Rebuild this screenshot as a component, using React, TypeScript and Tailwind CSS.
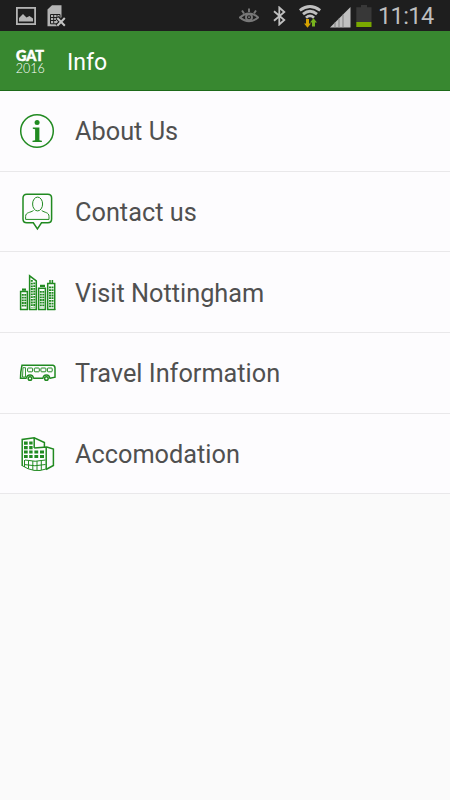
import React from "react";

const GREEN = "#218a21";

function PictureIcon() {
  return (
    <svg width="20" height="18" viewBox="0 0 20 18">
      <rect x="0.9" y="0.9" width="18.2" height="16.2" fill="none" stroke="#b4b4b4" strokeWidth="1.8" />
      <path d="M3 14.5V11L7 7L10.5 10.5L13.5 9L17 11.5V14.5Z" fill="#b4b4b4" />
    </svg>
  );
}

function SimIcon() {
  return (
    <svg width="20" height="22" viewBox="0 0 20 22">
      <path d="M0.5 4.5L5 0.3H14.5V12L10 21.2H0.5Z" fill="#b4b4b4" />
      <path d="M4 12.5H12.5M4 15.5H9M6.7 9.5V18.5M10 9.5V15" stroke="#1e1e1e" strokeWidth="1" fill="none" />
      <path d="M3.5 9.5H13V18.8H3.5Z" fill="none" stroke="#1e1e1e" strokeWidth="1" />
      <path d="M10 12.5L18 21M18 12.5L10 21" stroke="#1e1e1e" strokeWidth="4.2" />
      <path d="M10.3 13L17.8 20.8M17.8 13L10.3 20.8" stroke="#c4c4c4" strokeWidth="2" />
    </svg>
  );
}

function EyeIcon() {
  return (
    <svg width="20" height="18" viewBox="0 0 20 18" fill="none" stroke="#787878" strokeWidth="1.9">
      <path d="M0.8 10.5Q10 2.5 19.2 10.5Q10 17.8 0.8 10.5Z" />
      <circle cx="10" cy="10.2" r="3" />
      <circle cx="10" cy="10.2" r="1" fill="#787878" stroke="none" />
      <path d="M10 5V1.5M5 6.5L3 3.5M15 6.5L17 3.5" />
    </svg>
  );
}

function BluetoothIcon() {
  return (
    <svg width="13" height="20" viewBox="0 0 13 20">
      <path d="M1 5.2L11.3 14L6.3 18.5V1.5L11.3 6L1 14.8" fill="none" stroke="#c0c0c0" strokeWidth="1.8" />
    </svg>
  );
}

function WifiIcon() {
  return (
    <svg width="22" height="24" viewBox="0 0 22 24">
      <g fill="none" stroke="#c0c0c0" strokeWidth="2.8">
        <path d="M0.8 5.4Q11 -2.4 21.2 5.4" />
        <path d="M4 9.2Q11 3.4 18 9.2" />
        <path d="M7 12.8Q11 9 15 12.8" />
      </g>
      <path d="M7 14H10V18.5H12L8.5 22.8L5 18.5H7Z" fill="#d6a200" />
      <path d="M14.5 13.2L18 17.5H16V21.5H13V17.5H11Z" fill="#78b41e" />
    </svg>
  );
}

function SignalIcon() {
  return (
    <svg width="21" height="21" viewBox="0 0 21 21">
      <path d="M0 20.5L20.5 0V20.5Z" fill="#c0c0c0" />
      <path d="M5 15.5V20.5M9 11.5V20.5M13 7.5V20.5" stroke="#808080" strokeWidth="1" />
    </svg>
  );
}

function BatteryIcon() {
  return (
    <svg width="16" height="22" viewBox="0 0 16 22">
      <path d="M5 0H11V2.2H15.5V17H0.3V2.2H5Z" fill="#383838" />
      <rect x="0.3" y="17" width="15.2" height="5" fill="#7aa800" />
    </svg>
  );
}

function InfoIcon() {
  return (
    <svg width="40" height="40" viewBox="0 0 40 40">
      <circle cx="19" cy="20" r="16.3" fill="none" stroke={GREEN} strokeWidth="1.5" />
      <circle cx="19.1" cy="11.6" r="2.5" fill={GREEN} />
      <path d="M14.8 16.5H21.4V29.2L23.9 29.8V31H14.5V29.8L17.1 29.2V18.2L14.8 17.8Z" fill={GREEN} />
    </svg>
  );
}

function ContactIcon() {
  return (
    <svg width="40" height="40" viewBox="0 0 40 40" fill="none" stroke={GREEN}>
      <path
        d="M8.8 2.3H29.8Q33.6 2.3 33.6 6.1V27Q33.6 30.8 29.8 30.8H23.5L19.4 36.8L15.3 30.8H8.8Q5 30.8 5 27V6.1Q5 2.3 8.8 2.3Z"
        strokeWidth="1.5"
      />
      <ellipse cx="19.6" cy="12" rx="5" ry="6.9" strokeWidth="1" />
      <path d="M15.5 18.5C12.5 20.8 7.6 20 7.6 24.5V27.4H31V24.5C31 20 26.5 20.8 23.7 18.5" strokeWidth="1" />
    </svg>
  );
}

function CityIcon() {
  return (
    <svg width="40" height="40" viewBox="0 0 40 40" fill="none" stroke={GREEN}>
      <g strokeWidth="1.5">
        <path d="M2.6 38V19.6H9.4V38M11.6 38V3.8L18.3 8.8V38M20.6 38V16.3H27.4V38M29.7 38V11.6H36.7V38" />
        <path d="M2 37.5H10M11 37.5H19M20 37.5H28M29 37.5H37.4" />
      </g>
      <path d="M4 17.6H8M22 13.8H27" strokeWidth="2.2" />
      <path d="M32 8V11M34.4 8V11" strokeWidth="1.5" />
      <g strokeWidth="2" strokeDasharray="1.8 0.9">
        <path d="M4.8 22V35.5M7.3 22V35.5M13.8 8V35.5M16.3 10.5V35.5M22.8 19V35.5M25.3 19V35.5M32 14.5V35.5M34.5 14.5V35.5" />
      </g>
    </svg>
  );
}

function BusIcon() {
  return (
    <svg width="40" height="40" viewBox="0 0 40 40" fill="none" stroke={GREEN}>
      <path d="M8.5 25.2H2.5L2.8 19L4 12.2L35 12.2Q37 12.6 37 15V24.2L32 25.2H31.5M25.2 25.2H15.3" strokeWidth="1.5" />
      <path d="M8.5 25.5Q8.7 22 12 22Q15.2 22 15.5 25.5M25 25.5Q25.2 22 28.4 22Q31.6 22 31.8 25.5" strokeWidth="1.3" />
      <circle cx="12" cy="25.5" r="1.8" strokeWidth="1.5" />
      <circle cx="28.4" cy="25.5" r="1.8" strokeWidth="1.5" />
      <path d="M5 14.7H7.5V24H4.5Z" strokeWidth="0.9" />
      <g strokeWidth="1">
        <rect x="9.6" y="15" width="5" height="3.8" rx="0.8" />
        <rect x="16.3" y="15" width="5" height="3.8" rx="0.8" />
        <rect x="22.9" y="15" width="5" height="3.8" rx="0.8" />
        <rect x="29.4" y="15" width="4.8" height="3.8" rx="0.8" />
      </g>
    </svg>
  );
}

function HotelIcon() {
  return (
    <svg width="40" height="40" viewBox="0 0 40 40" fill="none" stroke={GREEN}>
      <path d="M4.2 32V5.4L16.2 3.8L26.4 8.6V13M16.2 3.8V14" strokeWidth="1.5" />
      <path d="M16.2 14L28.8 13L35.4 15V31.5L28 35.5M28.2 13.5V35" strokeWidth="1.5" />
      <g fill={GREEN} stroke="none">
        <path d="M6 7.6H9.7V10.8H6ZM11.2 7.4H14.6V10.6H11.2Z" />
        <path d="M6 12H9.7V15.3H6ZM11.2 12H14.6V15.3H11.2Z" />
        <path d="M6 16.4H9.7V19.6H6ZM11.2 16.4H14.6V19.6H11.2ZM16.4 16.4H20.2V19.6H16.4ZM22 16.4H26V19.6H22Z" />
        <path d="M6 21H9.7V24H6ZM11.2 21H14.6V24H11.2ZM16.4 21H20.2V24H16.4ZM22 21H26V24H22Z" />
      </g>
      <path d="M4 31.5Q16 39.5 28 35M7 26Q17 28.5 27.5 26M6.5 26V33M10.5 27V34.5M14.8 27V36M19 27V36.3M23.3 27V36M6 30.5Q17 33 27.5 30.5" strokeWidth="1" />
    </svg>
  );
}

function StatusBar() {
  return (
    <div className="h-[31px] bg-[#1e1e1e] flex items-start px-4">
      <div className="flex gap-[11px] items-start">
        <div className="pt-[7px]">
          <PictureIcon />
        </div>
        <div className="pt-[5px]">
          <SimIcon />
        </div>
      </div>
      <div className="flex items-start ml-auto">
        <div className="pt-[7px] mr-[14px]">
          <EyeIcon />
        </div>
        <div className="pt-[6px] mr-[13px]">
          <BluetoothIcon />
        </div>
        <div className="pt-[5px] mr-[9px]">
          <WifiIcon />
        </div>
        <div className="pt-[7px] mr-[5px]">
          <SignalIcon />
        </div>
        <div className="pt-[5px] mr-[6px]">
          <BatteryIcon />
        </div>
        <span className="w-[56px] text-[23.5px] leading-[32px] tracking-[-0.6px] text-[#bebebe] whitespace-nowrap">
          11:14
        </span>
      </div>
    </div>
  );
}

function Logo() {
  return (
    <div className="ml-4 w-[30px] flex flex-col text-white font-['Lato',sans-serif]">
      <svg width="30" height="16" viewBox="0 0 30 16" fill="#ffffff" overflow="visible">
        <text
          x="0"
          y="15.6"
          fontWeight="900"
          fontSize="15"
          stroke="#ffffff"
          strokeWidth="0.5"
          textLength="28"
          lengthAdjust="spacingAndGlyphs"
        >
          GAT
        </text>
      </svg>
      <svg width="30" height="16" viewBox="0 0 30 16" fill="#ffffff" overflow="visible">
        <text x="-0.3" y="11.8" fontWeight="300" fontSize="14.4" textLength="29" lengthAdjust="spacingAndGlyphs">
          2016
        </text>
      </svg>
    </div>
  );
}

function Header() {
  return (
    <header className="h-[60px] bg-[#388830] border-b border-[#1d6a1a] flex items-center">
      <Logo />
      <h1 className="ml-[21px] pt-[4px] text-[23px] leading-[28px] text-white">Info</h1>
    </header>
  );
}

const items = [
  { label: "About Us", icon: <InfoIcon /> },
  { label: "Contact us", icon: <ContactIcon /> },
  { label: "Visit Nottingham", icon: <CityIcon /> },
  { label: "Travel Information", icon: <BusIcon /> },
  { label: "Accomodation", icon: <HotelIcon /> },
];

function App() {
  return (
    <div className="w-full min-h-screen bg-[#fafafa] font-['Roboto',sans-serif]">
      <StatusBar />
      <Header />
      <ul>
        {items.map((item) => (
          <li
            key={item.label}
            className="h-[80.7px] bg-[#fdfcfe] border-b border-[#e9e8ea] flex items-center pl-[18px]"
          >
            {item.icon}
            <span className="ml-[17px] pt-[3px] text-[25.3px] leading-[30px] text-[#505050]">
              {item.label}
            </span>
          </li>
        ))}
      </ul>
    </div>
  );
}

export default App;
